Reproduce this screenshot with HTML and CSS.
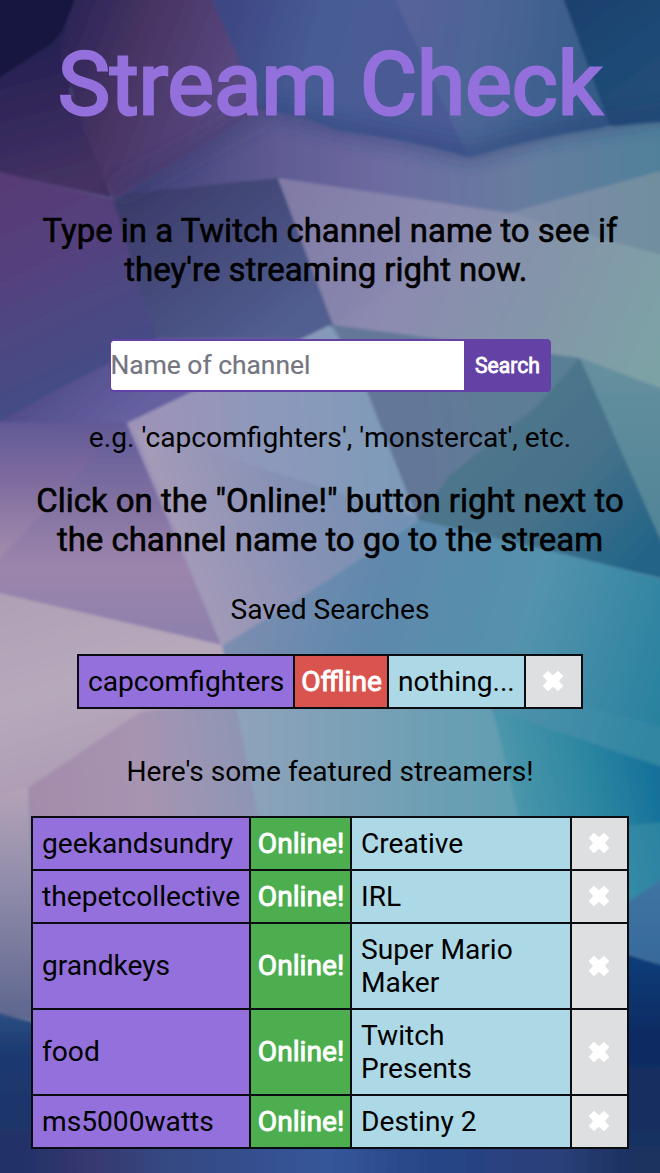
FILE: index.html
```html
<!DOCTYPE html>
<html lang="en">
<head>
<meta charset="utf-8">
<title>Stream Check</title>
<link rel="stylesheet" href="styles.css">
</head>
<body>
<svg class="backdrop" viewBox="0 0 660 1173" preserveAspectRatio="none" aria-hidden="true">
  <defs>
    <filter id="soft" x="0" y="0" width="660" height="1173" filterUnits="userSpaceOnUse"><feGaussianBlur stdDeviation="1.5"/></filter>
    <filter id="wide" x="-60" y="-60" width="780" height="1290" filterUnits="userSpaceOnUse"><feGaussianBlur stdDeviation="9"/></filter>
    <linearGradient id="a2" gradientUnits="userSpaceOnUse" x1="20" y1="40" x2="60" y2="190"><stop stop-color="#231f50"/><stop offset="1" stop-color="#453264"/></linearGradient>
    <linearGradient id="a3" gradientUnits="userSpaceOnUse" x1="70" y1="20" x2="250" y2="90"><stop stop-color="#2d2555"/><stop offset=".4" stop-color="#493565"/><stop offset="1" stop-color="#5a4b83"/></linearGradient>
    <linearGradient id="a4" gradientUnits="userSpaceOnUse" x1="225" y1="20" x2="400" y2="70"><stop stop-color="#3d4783"/><stop offset=".5" stop-color="#465b93"/><stop offset="1" stop-color="#4a5a95"/></linearGradient>
    <linearGradient id="a5" gradientUnits="userSpaceOnUse" x1="410" y1="50" x2="600" y2="80"><stop stop-color="#54639a"/><stop offset=".4" stop-color="#4b6596"/><stop offset="1" stop-color="#345b88"/></linearGradient>
    <linearGradient id="a6" gradientUnits="userSpaceOnUse" x1="570" y1="0" x2="660" y2="120"><stop stop-color="#1a406f"/><stop offset="1" stop-color="#22507a"/></linearGradient>
    <linearGradient id="a7" gradientUnits="userSpaceOnUse" x1="115" y1="0" x2="660" y2="0"><stop stop-color="#3b3d73"/><stop offset=".3" stop-color="#5f5b93"/><stop offset=".5" stop-color="#6d6ca1"/><stop offset=".75" stop-color="#667c9f"/><stop offset="1" stop-color="#51809a"/></linearGradient>
    <linearGradient id="a8" gradientUnits="userSpaceOnUse" x1="20" y1="180" x2="110" y2="370"><stop stop-color="#573b76"/><stop offset=".45" stop-color="#53427f"/><stop offset="1" stop-color="#444c86"/></linearGradient>
    <linearGradient id="a9" gradientUnits="userSpaceOnUse" x1="150" y1="190" x2="270" y2="340"><stop stop-color="#3b3c6a"/><stop offset="1" stop-color="#515e90"/></linearGradient>
    <linearGradient id="a10" gradientUnits="userSpaceOnUse" x1="290" y1="190" x2="660" y2="350"><stop stop-color="#837ba6"/><stop offset=".35" stop-color="#8c8bb0"/><stop offset=".65" stop-color="#8494a9"/><stop offset="1" stop-color="#7da2a6"/></linearGradient>
    <linearGradient id="a12" gradientUnits="userSpaceOnUse" x1="510" y1="0" x2="660" y2="0"><stop stop-color="#7f8aa8"/><stop offset="1" stop-color="#708e9f"/></linearGradient>
    <linearGradient id="a13" gradientUnits="userSpaceOnUse" x1="60" y1="370" x2="110" y2="430"><stop stop-color="#514c8a"/><stop offset="1" stop-color="#6560a0"/></linearGradient>
    <linearGradient id="a14" gradientUnits="userSpaceOnUse" x1="0" y1="420" x2="0" y2="560"><stop stop-color="#5f5896"/><stop offset=".45" stop-color="#806c9f"/><stop offset="1" stop-color="#a28dac"/></linearGradient>
    <linearGradient id="a15" gradientUnits="userSpaceOnUse" x1="0" y1="430" x2="0" y2="640"><stop stop-color="#635d9a"/><stop offset=".3" stop-color="#7c6ea0"/><stop offset=".65" stop-color="#9c85ac"/><stop offset="1" stop-color="#8c80ab"/></linearGradient>
    <linearGradient id="a16" gradientUnits="userSpaceOnUse" x1="150" y1="460" x2="400" y2="450"><stop stop-color="#9d92b8"/><stop offset=".5" stop-color="#8c99bb"/><stop offset="1" stop-color="#7e9ab8"/></linearGradient>
    <linearGradient id="a16b" gradientUnits="userSpaceOnUse" x1="190" y1="570" x2="400" y2="500"><stop stop-color="#a39ab7"/><stop offset=".5" stop-color="#8791b5"/><stop offset="1" stop-color="#7190b2"/></linearGradient>
    <linearGradient id="a17" gradientUnits="userSpaceOnUse" x1="400" y1="390" x2="570" y2="370"><stop stop-color="#647799"/><stop offset="1" stop-color="#587f93"/></linearGradient>
    <linearGradient id="a18" gradientUnits="userSpaceOnUse" x1="480" y1="400" x2="650" y2="560"><stop stop-color="#50758c"/><stop offset=".5" stop-color="#47728a"/><stop offset="1" stop-color="#216387"/></linearGradient>
    <linearGradient id="a19" gradientUnits="userSpaceOnUse" x1="0" y1="365" x2="0" y2="540"><stop stop-color="#658f9e"/><stop offset="1" stop-color="#4f8497"/></linearGradient>
    <linearGradient id="a20" gradientUnits="userSpaceOnUse" x1="240" y1="600" x2="660" y2="730"><stop stop-color="#7c8db0"/><stop offset=".3" stop-color="#5e88ac"/><stop offset=".65" stop-color="#5392ac"/><stop offset="1" stop-color="#27819f"/></linearGradient>
    <linearGradient id="a21" gradientUnits="userSpaceOnUse" x1="0" y1="600" x2="60" y2="800"><stop stop-color="#b0a0b6"/><stop offset=".5" stop-color="#b7a9bc"/><stop offset="1" stop-color="#ac9bb4"/></linearGradient>
    <linearGradient id="a22" gradientUnits="userSpaceOnUse" x1="30" y1="790" x2="260" y2="760"><stop stop-color="#a48bab"/><stop offset=".5" stop-color="#a694b1"/><stop offset="1" stop-color="#8b95b5"/></linearGradient>
    <linearGradient id="a23" gradientUnits="userSpaceOnUse" x1="240" y1="0" x2="540" y2="0"><stop stop-color="#8ea2bb"/><stop offset=".5" stop-color="#74a0b5"/><stop offset="1" stop-color="#5b9db0"/></linearGradient>
    <linearGradient id="a24" gradientUnits="userSpaceOnUse" x1="500" y1="790" x2="665" y2="755"><stop stop-color="#4f98ab"/><stop offset=".55" stop-color="#2b86a1"/><stop offset="1" stop-color="#116c98"/></linearGradient>
    <linearGradient id="a25" gradientUnits="userSpaceOnUse" x1="0" y1="790" x2="0" y2="1015"><stop stop-color="#b3a2b7"/><stop offset=".35" stop-color="#9690ad"/><stop offset="1" stop-color="#5f6790"/></linearGradient>
    <linearGradient id="a26" gradientUnits="userSpaceOnUse" x1="0" y1="880" x2="0" y2="960"><stop stop-color="#3e74a2"/><stop offset="1" stop-color="#376a9b"/></linearGradient>
    <linearGradient id="a27" gradientUnits="userSpaceOnUse" x1="0" y1="960" x2="0" y2="1173"><stop stop-color="#0a3c78"/><stop offset=".35" stop-color="#0e2b62"/><stop offset="1" stop-color="#1c315f"/></linearGradient>
    <linearGradient id="a28" gradientUnits="userSpaceOnUse" x1="0" y1="1015" x2="0" y2="1150"><stop stop-color="#2b4c80"/><stop offset=".3" stop-color="#1a3970"/><stop offset="1" stop-color="#213267"/></linearGradient>
    <linearGradient id="a29" gradientUnits="userSpaceOnUse" x1="0" y1="0" x2="660" y2="0"><stop stop-color="#213267"/><stop offset=".05" stop-color="#24336a"/><stop offset=".13" stop-color="#37376f"/><stop offset=".25" stop-color="#344881"/><stop offset=".5" stop-color="#34569a"/><stop offset=".65" stop-color="#274587"/><stop offset=".85" stop-color="#2a3f78"/><stop offset=".96" stop-color="#1b305f"/><stop offset="1" stop-color="#1b305f"/></linearGradient>
  </defs>
  <rect width="660" height="1173" fill="#7390aa"/>
  <g filter="url(#soft)">
    <path fill="url(#a2)" d="M-5-5H80L72 0 70 90 112 198-5 172Z"/>
    <path fill="url(#a3)" d="M72-5H211L262 110 113 200 82 125 60 55Z"/>
    <path fill="#12133f" d="M-5-5H76Q63 38 45 48L-5 81Z"/>
    <path fill="url(#a4)" d="M210-5H394L470 160 370 145 262 112Z"/>
    <path fill="url(#a5)" d="M393-5H563L618 124 470 160Z"/>
    <path fill="url(#a6)" d="M562-5H665V132L610 126Z"/>
    <path fill="url(#a7)" d="M113 200L262 110Q300 113 335 130Q420 142 470 158Q570 127 665 122V172L510 215 278 180Z"/>
    <path fill="url(#a8)" d="M-5 171L113 199 160 345-5 425Z"/>
    <path fill="url(#a9)" d="M113 200L135 193 278 178 334 326 300 345H158Z"/>
    <path fill="url(#a10)" d="M278 178L510 213 665 170V390L580 358 333 325Z"/>
    <path fill="url(#a12)" d="M510 213L665 170V256Z"/>
    <path fill="#787ead" opacity=".18" d="M333 325L510 213 278 178Z"/>
    <path fill="url(#a13)" d="M-5 424L55 391 158 338H305L190 393 127 425Z"/>
    <path fill="url(#a14)" d="M-5 422L127 423-5 572Z"/>
    <path fill="url(#a15)" d="M127 423L222 646-5 592V564Z"/>
    <path fill="url(#a16)" d="M127 423L330 325 367 391 418 520 333 577 222 647Z"/>
    <path fill="url(#a16b)" d="M134 428L200 448 308 483 418 518 333 577 222 647Z"/>
    <path fill="url(#a17)" d="M333 325L580 358 535 410 450 478 418 520 367 391Z"/>
    <path fill="url(#a18)" d="M580 358L665 545V579L418 520 450 475 535 408Z"/>
    <path fill="url(#a19)" d="M580 358L665 390V550Z"/>
    <path fill="url(#a20)" d="M222 646L333 577 418 520 560 553 665 580V770L495 720H240Z"/>
    <path fill="url(#a21)" d="M-5 592L222 645 236 710 140 715 28 788-5 800Z"/>
    <path fill="url(#a22)" d="M28 788L140 712 236 700 262 835 32 840Z"/>
    <path fill="url(#a23)" d="M236 706H490L535 835H262Z"/>
    <path fill="url(#a24)" d="M493 710L665 768V905H540Z"/>
    <path fill="#4791a8" opacity=".3" d="M493 710L565 700 665 728V768Z"/>
    <path fill="#3f93a9" opacity=".5" d="M520 835L665 822V905H600Z"/>
    <path fill="url(#a25)" d="M-5 798L28 786 40 1022-5 1013Z"/>
    <path fill="url(#a26)" d="M620 907L665 877V966L620 951Z"/>
    <path fill="url(#a27)" d="M620 952L665 966V1178H620Z"/>
    <path fill="url(#a28)" d="M-5 1012L40 1024V1178H-5Z"/>
    <path fill="url(#a29)" d="M-5 1146H665V1178H-5Z"/>
  </g>
  <g filter="url(#wide)" fill="none">
    <path stroke="#243a70" stroke-opacity=".5" stroke-width="14" d="M262 106L335 127 470 154 560 130 680 112"/>
    <path stroke="#353668" stroke-opacity=".35" stroke-width="20" d="M115 192L262 112"/>
  </g>
</svg>
<main class="page">
  <h1 class="title">Stream Check</h1>
  <h2 class="intro">Type in a Twitch channel name to see if they're streaming right now.&nbsp;</h2>
  <form class="search">
    <input class="search-input" type="text" placeholder="Name of channel">
    <button class="search-button" type="button">Search</button>
  </form>
  <p class="example">e.g. 'capcomfighters', 'monstercat', etc.</p>
  <h2 class="hint">Click on the "Online!" button right next to the channel name to go to the stream</h2>
  <p class="caption saved-caption">Saved Searches</p>
  <table class="streams saved">
    <colgroup><col class="s-name"><col class="s-status"><col class="s-game"><col class="s-close"></colgroup>
    <tr><td class="name">capcomfighters</td><td class="status offline">Offline</td><td class="game">nothing...</td><td class="close"><svg class="cross" viewBox="0 0 22 22"><path d="M6 .7L11 5.3 16 .7 21.3 6 17 11 21.3 16 16 21.3 11 16.7 6 21.3.7 16 5 11 .7 6Z"/></svg></td></tr>
  </table>
  <p class="caption featured-caption">Here's some featured streamers!</p>
  <table class="streams featured">
    <colgroup><col class="f-name"><col class="f-status"><col class="f-game"><col class="f-close"></colgroup>
    <tr><td class="name">geekandsundry</td><td class="status online">Online!</td><td class="game">Creative</td><td class="close"><svg class="cross" viewBox="0 0 22 22"><path d="M6 .7L11 5.3 16 .7 21.3 6 17 11 21.3 16 16 21.3 11 16.7 6 21.3.7 16 5 11 .7 6Z"/></svg></td></tr>
    <tr><td class="name">thepetcollective</td><td class="status online">Online!</td><td class="game">IRL</td><td class="close"><svg class="cross" viewBox="0 0 22 22"><path d="M6 .7L11 5.3 16 .7 21.3 6 17 11 21.3 16 16 21.3 11 16.7 6 21.3.7 16 5 11 .7 6Z"/></svg></td></tr>
    <tr class="tall"><td class="name">grandkeys</td><td class="status online">Online!</td><td class="game">Super Mario<br>Maker</td><td class="close"><svg class="cross" viewBox="0 0 22 22"><path d="M6 .7L11 5.3 16 .7 21.3 6 17 11 21.3 16 16 21.3 11 16.7 6 21.3.7 16 5 11 .7 6Z"/></svg></td></tr>
    <tr class="tall"><td class="name">food</td><td class="status online">Online!</td><td class="game">Twitch<br>Presents</td><td class="close"><svg class="cross" viewBox="0 0 22 22"><path d="M6 .7L11 5.3 16 .7 21.3 6 17 11 21.3 16 16 21.3 11 16.7 6 21.3.7 16 5 11 .7 6Z"/></svg></td></tr>
    <tr><td class="name">ms5000watts</td><td class="status online">Online!</td><td class="game">Destiny 2</td><td class="close"><svg class="cross" viewBox="0 0 22 22"><path d="M6 .7L11 5.3 16 .7 21.3 6 17 11 21.3 16 16 21.3 11 16.7 6 21.3.7 16 5 11 .7 6Z"/></svg></td></tr>
  </table>
</main>
</body>
</html>
```

FILE: styles.css
```css
* { box-sizing: border-box; }
body {
  margin: 0;
  height: 1173px;
  overflow: hidden;
  font-family: Roboto, "Liberation Sans", sans-serif;
  font-size: 28.15px;
  line-height: 33px;
  color: #000;
}
.backdrop { position: absolute; z-index: -1; top: 0; left: 0; width: 660px; height: 1173px; }
.page { display: flex; flex-direction: column; align-items: center; text-align: center; }
.title {
  margin: 30px 0 0;
  height: 108px;
  font-size: 87.6px;
  line-height: 108px;
  font-weight: 400;
  -webkit-text-stroke: 2.8px #9370db;
  color: #9370db;
  white-space: nowrap;
}
.intro, .hint {
  width: 600px;
  font-size: 32.95px;
  line-height: 38.5px;
  font-weight: 400;
  -webkit-text-stroke: 0.6px #000;
}
.intro { margin: 74px 0 0; }
.search {
  display: flex;
  width: 441px;
  height: 53px;
  margin: 50px 0 0;
  overflow: hidden;
  border: 1px solid #6441a4;
  border-radius: 4px;
  background: #6441a4;
}
.search-input {
  width: 353px;
  margin: 1px 0;
  padding: 0 0 2px;
  border: 0;
  border-radius: 3px 0 0 3px;
  background: #fff;
  font: 26.4px Roboto, sans-serif;
}
.search-input::placeholder { color: #757580; -webkit-text-stroke: 0.2px #757580; }
.search-button {
  flex: 1;
  padding: 0 0 0 2px;
  border: 0;
  background: #6441a4;
  color: #fff;
  font: 400 21.2px Roboto, sans-serif;
  -webkit-text-stroke: 0.8px #fff;
}
.example { margin: 29px 0 0; }
.hint { margin: 28px 0 0; }
.caption { margin: 0; }
.saved-caption { margin-top: 34px; }
.featured-caption { margin-top: 46px; }
.streams { border-collapse: collapse; table-layout: fixed; text-align: left; }
.streams tr { height: 53px; }
.streams .tall { height: 86px; }
.streams td { padding: 0 0 0 9px; border: 2px solid #0b0b12; }
.saved { width: 505px; margin-top: 28px; }
.featured { width: 597px; margin-top: 28px; }
.s-name { width: 216px; }
.s-status { width: 94px; }
.s-game { width: 137px; }
.s-close { width: 57px; }
.f-name { width: 218px; }
.f-status { width: 101px; }
.f-game { width: 220px; }
.f-close { width: 57px; }
.name { background: #9370db; }
.game { background: #add8e6; }
.streams .status { padding: 0 0 0 1px; text-align: center; color: #fff; -webkit-text-stroke: 0.9px #fff; }
.tall .name, .tall .status { padding-bottom: 2px; }
.offline { background: #d9534f; }
.online { background: #4cae4f; }
.streams .close { padding: 0 1px 1px 0; background: #dddfe1; }
.cross { display: block; width: 22px; height: 22px; margin: 0 auto; fill: #fff; }
```
